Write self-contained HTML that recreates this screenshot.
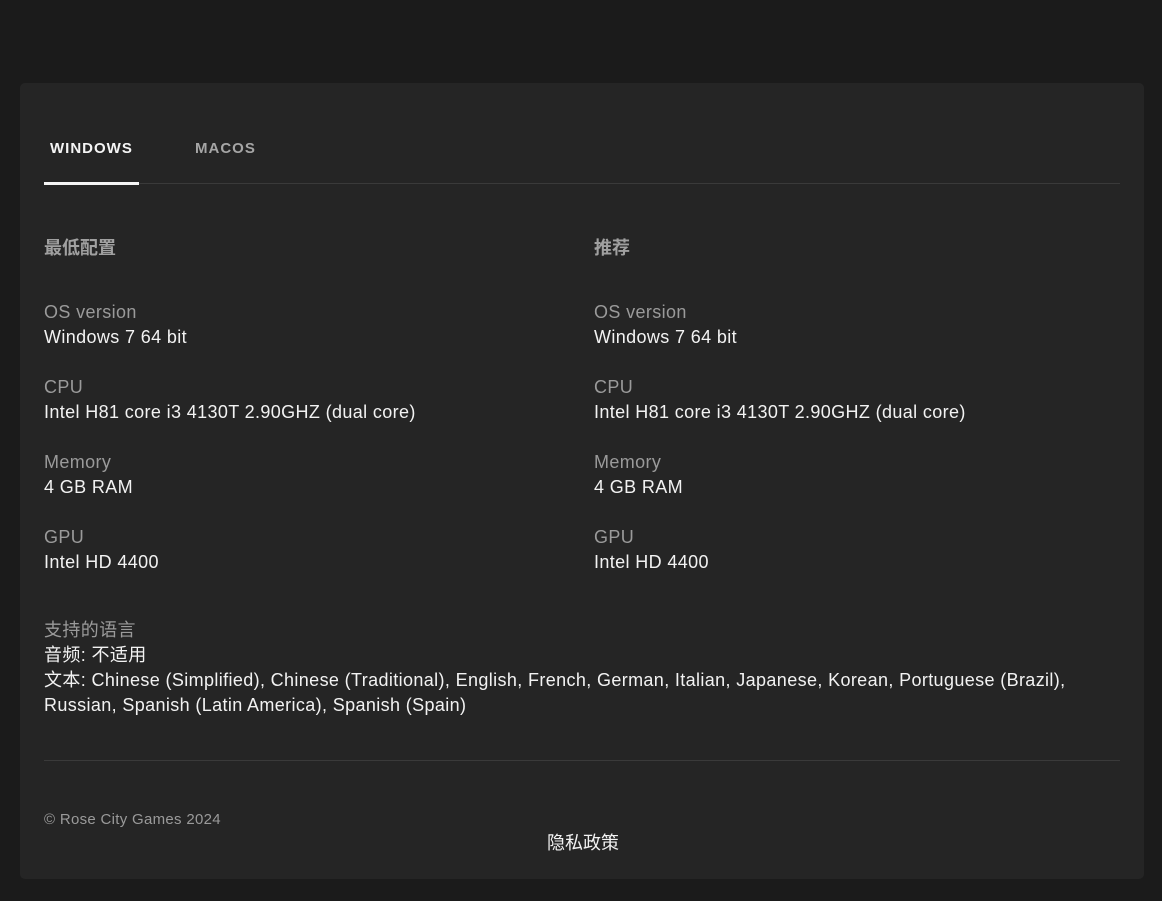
<!DOCTYPE html>
<html><head><meta charset="utf-8"><style>
body{margin:0;background:#1b1b1b;width:1162px;height:901px;position:relative;overflow:hidden;font-family:"Liberation Sans","Noto Sans CJK SC",sans-serif;}
.card{position:absolute;left:20px;top:83px;width:1124px;height:796px;background:#252525;border-radius:5px;}
.a{position:absolute;white-space:nowrap;line-height:25px;}
.tab{font-size:15px;font-weight:bold;top:139px;line-height:20px;letter-spacing:1px;}
.h{font-size:18px;color:#a0a0a0;font-weight:bold;}
.l{font-size:18px;color:#9a9a9a;letter-spacing:0.37px;}
.v{font-size:18px;color:#f2f2f2;letter-spacing:0.37px;}
</style></head><body>
<div class="card"></div>
<div class="a tab" style="left:50px;color:#f5f5f5">WINDOWS</div>
<div class="a tab" style="left:195px;color:#a6a6a6">MACOS</div>
<div class="a" style="left:44px;top:183px;width:1076px;height:1px;background:#3a3a3a"></div>
<div class="a" style="left:44px;top:182px;width:95px;height:3px;background:#f5f5f5"></div>

<div class="a h" style="left:44px;top:236px">最低配置</div>
<div class="a h" style="left:594px;top:236px">推荐</div>

<div class="a l" style="left:44px;top:300px">OS version</div>
<div class="a v" style="left:44px;top:325px">Windows 7 64 bit</div>
<div class="a l" style="left:44px;top:375px">CPU</div>
<div class="a v" style="left:44px;top:400px">Intel H81 core i3 4130T 2.90GHZ (dual core)</div>
<div class="a l" style="left:44px;top:450px">Memory</div>
<div class="a v" style="left:44px;top:475px">4 GB RAM</div>
<div class="a l" style="left:44px;top:525px">GPU</div>
<div class="a v" style="left:44px;top:550px">Intel HD 4400</div>

<div class="a l" style="left:594px;top:300px">OS version</div>
<div class="a v" style="left:594px;top:325px">Windows 7 64 bit</div>
<div class="a l" style="left:594px;top:375px">CPU</div>
<div class="a v" style="left:594px;top:400px">Intel H81 core i3 4130T 2.90GHZ (dual core)</div>
<div class="a l" style="left:594px;top:450px">Memory</div>
<div class="a v" style="left:594px;top:475px">4 GB RAM</div>
<div class="a l" style="left:594px;top:525px">GPU</div>
<div class="a v" style="left:594px;top:550px">Intel HD 4400</div>

<div class="a l" style="left:44px;top:618px">支持的语言</div>
<div class="a v" style="left:44px;top:643px">音频: 不适用</div>
<div class="a v" style="left:44px;top:668px">文本: Chinese (Simplified), Chinese (Traditional), English, French, German, Italian, Japanese, Korean, Portuguese (Brazil),</div>
<div class="a v" style="left:44px;top:693px">Russian, Spanish (Latin America), Spanish (Spain)</div>

<div class="a" style="left:44px;top:760px;width:1076px;height:1px;background:#3a3a3a"></div>
<div class="a" style="left:44px;top:810px;line-height:20px;font-size:15px;letter-spacing:0.3px;color:#9a9a9a">© Rose City Games 2024</div>
<div class="a" style="left:547px;top:831px;font-size:18px;color:#f2f2f2">隐私政策</div>
</body></html>
